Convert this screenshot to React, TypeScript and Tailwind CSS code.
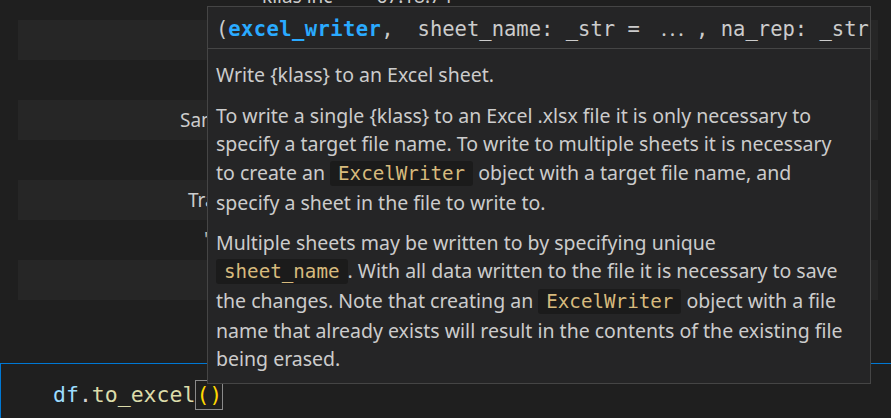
import React from 'react';

const mono = { fontFamily: '"DejaVu Sans Mono", monospace' };
const sans = { fontFamily: '"Noto Sans", sans-serif' };

function Code({ children }: { children: React.ReactNode }) {
  return (
    <span
      className="rounded-[3px] bg-[#1b1b1b] px-[8px] py-[1px] text-[#d7ba7d] text-[19.2px]"
      style={mono}
    >
      {children}
    </span>
  );
}

function Line({ children }: { children: React.ReactNode }) {
  return <div className="whitespace-nowrap">{children}</div>;
}

function BandRow({ light, children }: { light?: boolean; children?: React.ReactNode }) {
  return (
    <div className={`h-[40px] flex items-center ${light ? 'bg-[#262626]' : ''}`}>
      {children}
    </div>
  );
}

function Ellipsis() {
  return (
    <span className="inline-block w-[44px] text-center">
      <span className="tracking-[3px]" style={sans}>...</span>
    </span>
  );
}

function HoverWidget() {
  return (
    <div className="absolute left-[207px] top-[6px] w-[664px] h-[378px] border border-[#454545] bg-[#252526] overflow-hidden">
      {/* signature */}
      <div
        className="h-[42px] leading-[42px] pl-[8px] border-b border-[#454545] whitespace-nowrap text-[20.5px] text-[#cccccc]"
        style={mono}
      >
        (<span className="font-bold text-[#2aaaff] tracking-[0.4px]">excel_writer</span>,
        <span className="inline-block w-[24px]" />
        sheet_name: _str =&nbsp;
        <Ellipsis />, na_rep: _str =&nbsp;
        <Ellipsis />, float_format
      </div>

      {/* docs */}
      <div className="px-[8px] pt-[12px] text-[19.5px] leading-[28.7px] text-[#cccccc]" style={sans}>
        <p>Write {'{klass}'} to an Excel sheet.</p>
        <div className="mt-[12px]">
          <Line>To write a single {'{klass}'} to an Excel .xlsx file it is only necessary to</Line>
          <Line>specify a target file name. To write to multiple sheets it is necessary</Line>
          <Line>
            to create an <Code>ExcelWriter</Code> object with a target file name, and
          </Line>
          <Line>specify a sheet in the file to write to.</Line>
        </div>
        <div className="mt-[11px]">
          <Line>Multiple sheets may be written to by specifying unique</Line>
          <Line>
            <Code>sheet_name</Code>. With all data written to the file it is necessary to save
          </Line>
          <Line>
            the changes. Note that creating an <Code>ExcelWriter</Code> object with a file
          </Line>
          <Line>name that already exists will result in the contents of the existing file</Line>
          <Line>being erased.</Line>
        </div>
      </div>
    </div>
  );
}

export default function App() {
  return (
    <div className="relative w-[891px] h-[418px] overflow-hidden bg-[#1f1f1f] text-[#cccccc]" style={sans}>
      {/* dataframe output behind the hover */}
      <div className="h-[363px] pl-[18px] pr-[13px] text-[19px]">
        <div className="h-[20px] overflow-hidden">
          <div className="flex -mt-[16px] leading-[24px]">
            <span className="ml-[244px]">klias inc</span>
            <span className="ml-[44px]">67.18.74</span>
          </div>
        </div>
        <BandRow light />
        <BandRow />
        <BandRow light>
          <span className="ml-[162px]">Samsung</span>
        </BandRow>
        <BandRow />
        <BandRow light>
          <span className="ml-[170px]">Trading</span>
        </BandRow>
        <BandRow>
          <span className="ml-[186px] -mt-[2px] text-[#bbbbbb]">'</span>
        </BandRow>
        <BandRow light />
      </div>

      {/* focused code cell */}
      <div className="h-[55px] border-t border-l border-[#0078d4] flex items-center pl-[52px] pt-[8px]">
        <span className="text-[21.5px] leading-[28px] whitespace-nowrap" style={mono}>
          <span className="text-[#9cdcfe]">df</span>
          <span className="text-[#d4d4d4]">.</span>
          <span className="text-[#dcdcaa]">to_excel</span>
          <span className="inline-block border border-[#8a8a8a] text-[#ffd700]">()</span>
        </span>
      </div>

      <HoverWidget />
    </div>
  );
}
